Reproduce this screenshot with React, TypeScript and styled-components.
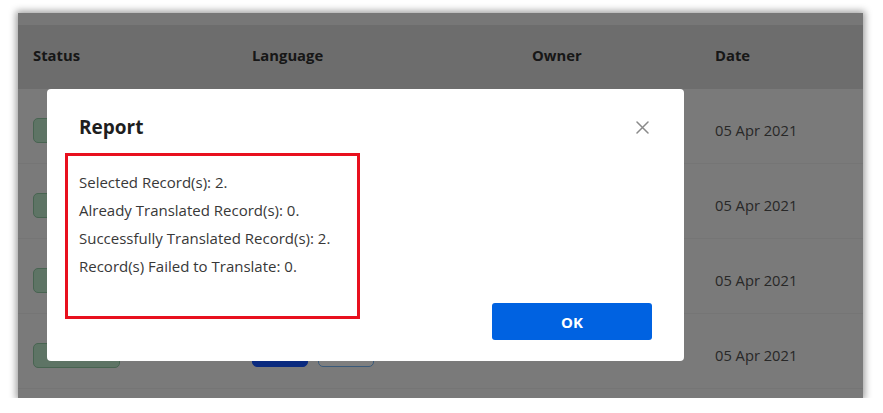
import styled, { createGlobalStyle } from "styled-components"

const GlobalStyle = createGlobalStyle`
  html, body {
    margin: 0;
    padding: 0;
    background: #ffffff;
  }
  body {
    font-family: "Open Sans", "Liberation Sans", sans-serif;
  }
`

const Frame = styled.div`
  position: relative;
  width: 845px;
  height: 385px;
  margin: 13px 0 0 18px;
  overflow: hidden;
  background: #f4f4f4;
  box-shadow: 0 0 7px 2px rgba(0, 0, 0, 0.38);
`
const TopStrip = styled.div`
  height: 12px;
  background: #eeeeee;
`
const Grid = styled.div`
  display: grid;
  grid-template-columns: 219px 280px 183px 1fr;
  padding-left: 15px;
  align-items: center;
`
const HeaderRow = styled(Grid)`
  height: 64px;
  padding-bottom: 4px;
  box-sizing: border-box;
  background: #dadada;
`
const HeaderCell = styled.div`
  font-size: 14.8px;
  font-weight: 700;
  color: #2e2e2e;
`
const Row = styled(Grid)`
  height: 75px;
  padding-top: 8px;
  box-sizing: border-box;
  border-bottom: 1px solid #ebebeb;
`
const DateCell = styled.div`
  font-size: 14.7px;
  color: #505050;
`
const Badge = styled.div`
  width: 85px;
  height: 23px;
  border: 1.5px solid #90c8a2;
  border-radius: 5px;
  background: #bce8cb;
`
const Chips = styled.div`
  display: flex;
  gap: 10px;
`
const Chip = styled.div<{ $filled?: boolean }>`
  width: 56px;
  height: 24px;
  border-radius: 5px;
  box-sizing: border-box;
  background: ${(p) => (p.$filled ? "#1554ff" : "#ffffff")};
  border: 1.5px solid ${(p) => (p.$filled ? "#1554ff" : "#74b4f4")};
`
const Overlay = styled.div`
  position: absolute;
  inset: 0;
  background: rgba(0, 0, 0, 0.5);
`
const Modal = styled.div`
  position: absolute;
  left: 29px;
  top: 76px;
  width: 637px;
  height: 272px;
  background: #ffffff;
  border-radius: 4px;
  display: flex;
  flex-direction: column;
`
const ModalHeader = styled.div`
  height: 64px;
  padding: 24px 32px 0 32px;
  box-sizing: border-box;
  display: flex;
  justify-content: space-between;
`
const Title = styled.h2`
  margin: 0;
  font-size: 19px;
  line-height: 28px;
  font-weight: 700;
  color: #1e1e1e;
`
const Close = styled.button`
  border: none;
  background: none;
  padding: 0;
  width: 20px;
  height: 28px;
  display: flex;
  align-items: center;
  justify-content: center;
  cursor: pointer;
`
const Body = styled.div`
  flex: 1;
  display: flex;
  justify-content: space-between;
  align-items: flex-end;
  padding: 0 32px 21px 18px;
`
const Highlight = styled.div`
  width: 295px;
  height: 166px;
  box-sizing: border-box;
  margin-bottom: 21px;
  border: 3px solid #e8101e;
  padding: 12px 11px 0 11px;
`
const Line = styled.p`
  margin: 0;
  font-size: 15px;
  line-height: 28px;
  color: #383838;
  white-space: nowrap;
`
const OkButton = styled.button`
  width: 160px;
  height: 37px;
  border: none;
  border-radius: 3px;
  background: #0062e1;
  color: #ffffff;
  font-family: "Open Sans", "Liberation Sans", sans-serif;
  font-size: 15px;
  font-weight: 700;
  cursor: pointer;
`

const rows = ["05 Apr 2021", "05 Apr 2021", "05 Apr 2021", "05 Apr 2021"]
const report = [
  "Selected Record(s): 2.",
  "Already Translated Record(s): 0.",
  "Successfully Translated Record(s): 2.",
  "Record(s) Failed to Translate: 0.",
]

export default function App() {
  return (
    <>
      <GlobalStyle />
      <Frame>
        <TopStrip />
        <HeaderRow>
          <HeaderCell>Status</HeaderCell>
          <HeaderCell>Language</HeaderCell>
          <HeaderCell>Owner</HeaderCell>
          <HeaderCell>Date</HeaderCell>
        </HeaderRow>
        {rows.map((date, i) => (
          <Row key={i}>
            <Badge />
            <Chips>
              <Chip $filled />
              <Chip />
            </Chips>
            <div />
            <DateCell>{date}</DateCell>
          </Row>
        ))}
        <Overlay />
        <Modal role="dialog">
          <ModalHeader>
            <Title>Report</Title>
            <Close aria-label="Close">
              <svg width="13" height="13" viewBox="0 0 13 13">
                <path
                  d="M1 1 L12 12 M12 1 L1 12"
                  stroke="#8a8a8a"
                  strokeWidth="1.5"
                  strokeLinecap="round"
                />
              </svg>
            </Close>
          </ModalHeader>
          <Body>
            <Highlight>
              {report.map((line) => (
                <Line key={line}>{line}</Line>
              ))}
            </Highlight>
            <OkButton>OK</OkButton>
          </Body>
        </Modal>
      </Frame>
    </>
  )
}
